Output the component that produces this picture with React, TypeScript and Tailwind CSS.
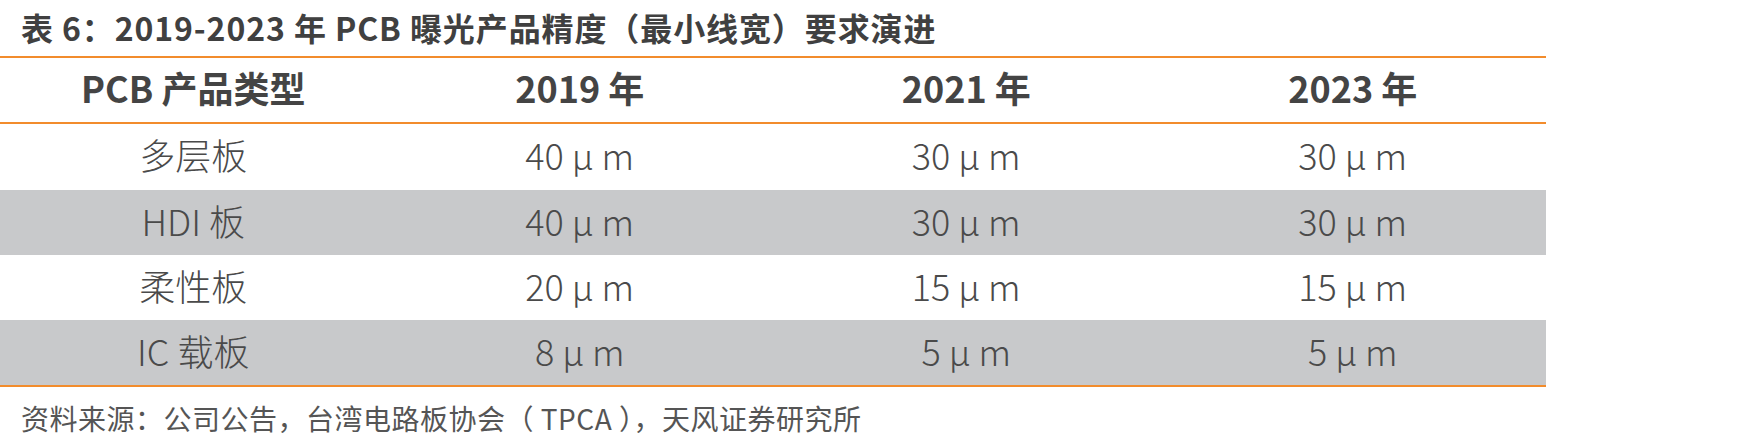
import React from "react";

const font = { fontFamily: '"Noto Sans CJK SC", "Noto Sans", sans-serif' };

const rows = [
  { name: "多层板", v: ["40 μ m", "30 μ m", "30 μ m"], gray: false },
  { name: "HDI 板", v: ["40 μ m", "30 μ m", "30 μ m"], gray: true },
  { name: "柔性板", v: ["20 μ m", "15 μ m", "15 μ m"], gray: false },
  { name: "IC 载板", v: ["8 μ m", "5 μ m", "5 μ m"], gray: true },
];

export default function App() {
  return (
    <div className="w-[1747px] h-[448px] bg-white" style={font}>
      <div className="h-[56px] pl-[21px] pb-[2px] flex items-center text-[32px] font-bold text-[#404040] leading-none tracking-[0.9px]">
        表 6：2019-2023 年 PCB 曝光产品精度（最小线宽）要求演进
      </div>
      <div className="w-[1546px] border-t-2 border-b-2 border-[#f28c2c]">
        <div className="grid grid-cols-4 h-[66px] pb-[6px] border-b-2 border-[#f28c2c] text-[36px] font-bold text-[#444444]">
          <div className="flex items-center justify-center">PCB 产品类型</div>
          <div className="flex items-center justify-center">2019 年</div>
          <div className="flex items-center justify-center">2021 年</div>
          <div className="flex items-center justify-center">2023 年</div>
        </div>
        {rows.map((r, i) => (
          <div
            key={i}
            className={`grid grid-cols-4 ${i === 0 ? "h-[66px]" : "h-[65px]"} pb-[6px] text-[36px] font-light text-[#4a4a4a] ${r.gray ? "bg-[#c8c9cb]" : "bg-white"}`}
          >
            <div className="flex items-center justify-center">{r.name}</div>
            {r.v.map((x, j) => (
              <div key={j} className="flex items-center justify-center">{x}</div>
            ))}
          </div>
        ))}
      </div>
      <div className="h-[62px] pl-[21px] flex items-center text-[28px] text-[#555555] leading-none tracking-[0.5px]">
        资料来源：公司公告，台湾电路板协会（ TPCA ），天风证券研究所
      </div>
    </div>
  );
}
